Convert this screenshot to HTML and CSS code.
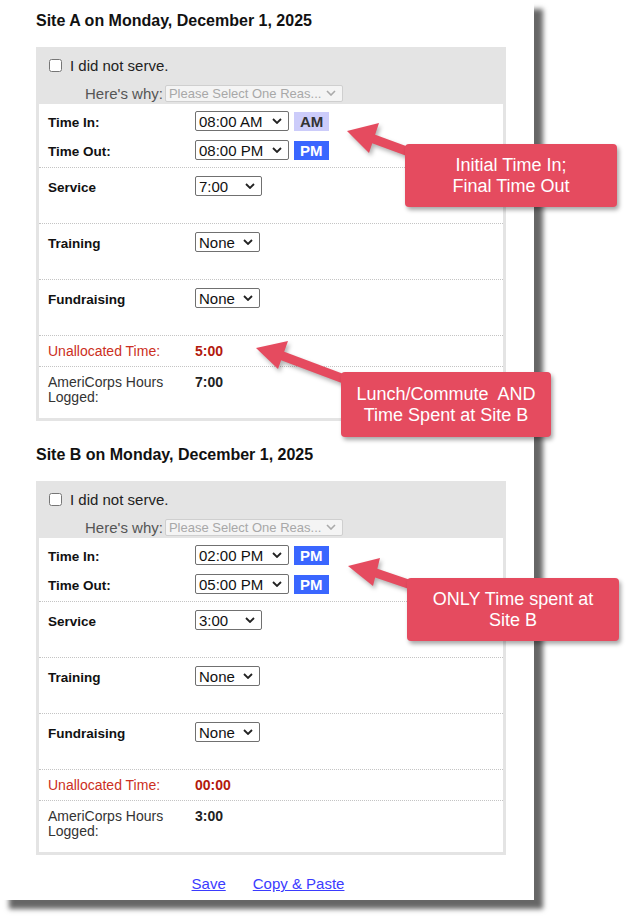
FILE: index.html
```html
<!DOCTYPE html>
<html lang="en">
  <head>
    <meta charset="UTF-8" />
    <meta name="viewport" content="width=device-width, initial-scale=1.0" />
    <title>Timesheet</title>
    <link rel="stylesheet" href="styles.css">
  </head>
  <body>
    <div class="sheet">
      <section class="day">
        <h2>Site A on Monday, December 1, 2025</h2>
        <div class="panel">
          <div class="panel-head">
            <label class="skip"><input type="checkbox"> I did not serve.</label>
            <div class="why">
              <span>Here's why:</span>
              <span class="reason">Please Select One Reas...
                <svg width="10" height="6" viewBox="0 0 10 6"><path d="M1 1l4 4 4-4" /></svg>
              </span>
            </div>
          </div>
          <div class="panel-body">
            <div class="row times">
              <span class="lbl">Time In:</span>
              <span class="val">
                <span class="sel w-time">08:00 AM <svg width="10" height="6" viewBox="0 0 10 6"><path d="M1 1l4 4 4-4" /></svg></span>
                <span class="badge am">AM</span>
              </span>
              <span class="lbl">Time Out:</span>
              <span class="val">
                <span class="sel w-time">08:00 PM <svg width="10" height="6" viewBox="0 0 10 6"><path d="M1 1l4 4 4-4" /></svg></span>
                <span class="badge pm">PM</span>
              </span>
            </div>
            <div class="row tall">
              <span class="lbl">Service</span>
              <span class="val"><span class="sel w-hours">7:00 <svg width="10" height="6" viewBox="0 0 10 6"><path d="M1 1l4 4 4-4" /></svg></span></span>
            </div>
            <div class="row tall">
              <span class="lbl">Training</span>
              <span class="val"><span class="sel w-none">None <svg width="10" height="6" viewBox="0 0 10 6"><path d="M1 1l4 4 4-4" /></svg></span></span>
            </div>
            <div class="row tall">
              <span class="lbl">Fundraising</span>
              <span class="val"><span class="sel w-none">None <svg width="10" height="6" viewBox="0 0 10 6"><path d="M1 1l4 4 4-4" /></svg></span></span>
            </div>
            <div class="row sum warn">
              <span class="txt">Unallocated Time:</span>
              <span class="num">5:00</span>
            </div>
            <div class="row sum total">
              <span class="txt">AmeriCorps Hours<br>Logged:</span>
              <span class="num">7:00</span>
            </div>
          </div>
        </div>
      </section>

      <section class="day second">
        <h2>Site B on Monday, December 1, 2025</h2>
        <div class="panel">
          <div class="panel-head">
            <label class="skip"><input type="checkbox"> I did not serve.</label>
            <div class="why">
              <span>Here's why:</span>
              <span class="reason">Please Select One Reas...
                <svg width="10" height="6" viewBox="0 0 10 6"><path d="M1 1l4 4 4-4" /></svg>
              </span>
            </div>
          </div>
          <div class="panel-body">
            <div class="row times">
              <span class="lbl">Time In:</span>
              <span class="val">
                <span class="sel w-time">02:00 PM <svg width="10" height="6" viewBox="0 0 10 6"><path d="M1 1l4 4 4-4" /></svg></span>
                <span class="badge pm">PM</span>
              </span>
              <span class="lbl">Time Out:</span>
              <span class="val">
                <span class="sel w-time">05:00 PM <svg width="10" height="6" viewBox="0 0 10 6"><path d="M1 1l4 4 4-4" /></svg></span>
                <span class="badge pm">PM</span>
              </span>
            </div>
            <div class="row tall">
              <span class="lbl">Service</span>
              <span class="val"><span class="sel w-hours">3:00 <svg width="10" height="6" viewBox="0 0 10 6"><path d="M1 1l4 4 4-4" /></svg></span></span>
            </div>
            <div class="row tall">
              <span class="lbl">Training</span>
              <span class="val"><span class="sel w-none">None <svg width="10" height="6" viewBox="0 0 10 6"><path d="M1 1l4 4 4-4" /></svg></span></span>
            </div>
            <div class="row tall">
              <span class="lbl">Fundraising</span>
              <span class="val"><span class="sel w-none">None <svg width="10" height="6" viewBox="0 0 10 6"><path d="M1 1l4 4 4-4" /></svg></span></span>
            </div>
            <div class="row sum warn">
              <span class="txt">Unallocated Time:</span>
              <span class="num">00:00</span>
            </div>
            <div class="row sum total">
              <span class="txt">AmeriCorps Hours<br>Logged:</span>
              <span class="num">3:00</span>
            </div>
          </div>
        </div>
      </section>

      <div class="links">
        <a href="#">Save</a>
        <a href="#">Copy &amp; Paste</a>
      </div>

      <!-- callout arrows -->
      <svg class="arrows" width="644" height="922" viewBox="0 0 644 922">
        <line x1="371" y1="138" x2="420" y2="156" />
        <polygon points="347,131 379,123 369,153" />
        <line x1="280" y1="355" x2="352" y2="382" />
        <polygon points="256,348 288,341 278,369" />
        <line x1="373" y1="572" x2="420" y2="588" />
        <polygon points="348,566 380,558 373,586" />
      </svg>
      <div class="note n1">Initial Time In;<br>Final Time Out</div>
      <div class="note n2">Lunch/Commute&nbsp; AND<br>Time Spent at Site B</div>
      <div class="note n3">ONLY Time spent at<br>Site B</div>
    </div>
  </body>
</html>
```

FILE: styles.css
```css
body {
  margin: 0;
  padding-bottom: 22px;
  background: #fff;
  font-family: "Liberation Sans", Arial, sans-serif;
  color: #111;
}
.sheet {
  position: relative;
  width: 534px;
  height: 900px;
  box-sizing: border-box;
  padding: 12px 0 0 36px;
  background: #fff;
  box-shadow: 9px 9px 5px rgba(0, 0, 0, 0.6);
}
.day h2 {
  margin: 0 0 17px;
  font-size: 16px;
  line-height: 18px;
  font-weight: bold;
}
.day.second {
  margin-top: 25px;
}
.panel {
  width: 470px;
  box-sizing: border-box;
  border: 3px solid #e4e4e4;
  border-top: none;
}
.panel-head {
  background: #e4e4e4;
  padding: 8px 0 1px 10px;
}
.skip {
  display: flex;
  align-items: center;
  height: 20px;
  font-size: 15px;
  color: #222;
}
.skip input {
  margin: 0 8px 0 0;
  width: 13px;
  height: 13px;
}
.why {
  display: flex;
  align-items: center;
  height: 20px;
  margin-top: 8px;
  padding-left: 36px;
  font-size: 15px;
  color: #555;
}
.reason {
  display: inline-flex;
  align-items: center;
  justify-content: space-between;
  width: 178px;
  height: 17px;
  box-sizing: border-box;
  margin-left: 2px;
  padding: 0 6px 0 3px;
  border: 1px solid #cfcfcf;
  border-radius: 2px;
  background: #f4f4f4;
  font-size: 13px;
  color: #a8a8a8;
}
.reason svg path {
  fill: none;
  stroke: #aaa;
  stroke-width: 1.6;
}
.panel-body {
  background: #fff;
}
.row {
  display: grid;
  grid-template-columns: 147px 1fr;
  align-items: baseline;
  padding-left: 9px;
  border-bottom: 1px dotted #c4c4c4;
}
.row.times {
  row-gap: 9px;
  padding-top: 7px;
  padding-bottom: 7px;
}
.row.tall {
  padding-top: 8px;
  padding-bottom: 27px;
}
.lbl {
  font-size: 13.5px;
  font-weight: bold;
  color: #111;
}
.val {
  display: flex;
  align-items: baseline;
}
.sel {
  display: inline-flex;
  align-items: center;
  justify-content: space-between;
  height: 20px;
  box-sizing: border-box;
  padding: 0 6px 0 3px;
  border: 1px solid #707070;
  border-radius: 2px;
  font-size: 15px;
  color: #111;
}
.sel svg path {
  fill: none;
  stroke: #222;
  stroke-width: 1.8;
}
.w-time {
  width: 94px;
}
.w-hours {
  width: 67px;
}
.w-none {
  width: 65px;
}
.badge {
  display: inline-block;
  height: 19px;
  line-height: 19px;
  margin-left: 5px;
  padding: 0 6px;
  font-size: 15px;
  font-weight: bold;
}
.badge.am {
  background: #ccccfa;
  color: #333;
}
.badge.pm {
  background: #3a66ff;
  color: #fff;
}
.row.sum {
  padding-top: 7px;
  padding-bottom: 7px;
  font-size: 14px;
  line-height: 16px;
}
.row.sum .num {
  font-weight: bold;
}
.warn {
  color: #cc2f22;
}
.warn .num {
  color: #b3190d;
}
.total {
  border-bottom: none;
  padding-bottom: 13px !important;
  color: #333;
}
.total .txt {
  line-height: 15px;
}
.total .num {
  color: #222;
}
.links {
  display: flex;
  justify-content: center;
  gap: 27px;
  width: 464px;
  margin-top: 20px;
  font-size: 15px;
  line-height: 18px;
}
.links a {
  color: #3b3bff;
}
.arrows {
  position: absolute;
  left: 0;
  top: 0;
  pointer-events: none;
  filter: drop-shadow(2px 3px 2px rgba(0, 0, 0, 0.3));
}
.arrows line {
  stroke: #e54b5f;
  stroke-width: 9;
}
.arrows polygon {
  fill: #e54b5f;
}
.note {
  position: absolute;
  box-sizing: border-box;
  display: flex;
  align-items: center;
  justify-content: center;
  text-align: center;
  background: #e54b5f;
  color: #fff;
  border-radius: 4px;
  font-size: 18px;
  line-height: 21px;
  box-shadow: 2px 3px 4px rgba(0, 0, 0, 0.35);
}
.n1 {
  left: 405px;
  top: 144px;
  width: 212px;
  height: 63px;
}
.n2 {
  left: 341px;
  top: 372px;
  width: 210px;
  height: 65px;
}
.n3 {
  left: 407px;
  top: 578px;
  width: 212px;
  height: 63px;
}
```
